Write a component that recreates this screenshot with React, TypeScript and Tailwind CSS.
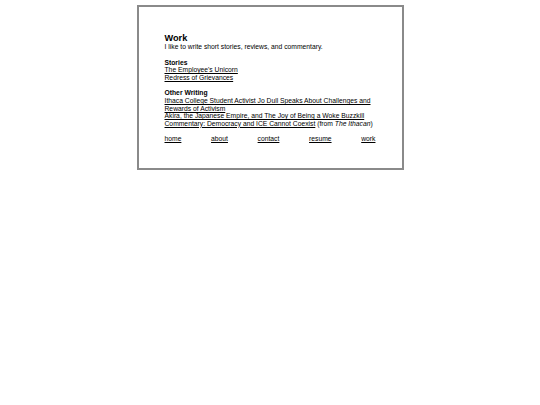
export default function App() {
  return (
    <div className="min-h-[405px] bg-white pt-[5px] font-['Liberation_Sans',Arial,sans-serif] text-black">
      <div className="mx-auto w-[267px] border-2 border-[#8a8a8a] px-[26px] pt-[26px] pb-[25px] text-[6.75px] leading-[7.6px]">
        <h1 className="text-[9.2px] font-bold leading-[10px]">Work</h1>
        <p>I like to write short stories, reviews, and commentary.</p>

        <h2 className="mt-[8px] font-bold">Stories</h2>
        <div className="flex flex-col items-start">
          <a href="#" className="underline">The Employee's Unicorn</a>
          <a href="#" className="underline">Redress of Grievances</a>
        </div>

        <h2 className="mt-[8px] font-bold">Other Writing</h2>
        <div>
          <a href="#" className="underline">
            Ithaca College Student Activist Jo Dull Speaks About Challenges and Rewards of Activism
          </a>
        </div>
        <div>
          <a href="#" className="underline">Akira, the Japanese Empire, and The Joy of Being a Woke Buzzkill</a>
        </div>
        <div>
          <a href="#" className="underline">Commentary: Democracy and ICE Cannot Coexist</a> (from <i>The Ithacan</i>)
        </div>

        <nav className="mt-[8px] flex justify-between">
          <a href="#" className="underline">home</a>
          <a href="#" className="underline">about</a>
          <a href="#" className="underline">contact</a>
          <a href="#" className="underline">resume</a>
          <a href="#" className="underline">work</a>
        </nav>
      </div>
    </div>
  );
}
